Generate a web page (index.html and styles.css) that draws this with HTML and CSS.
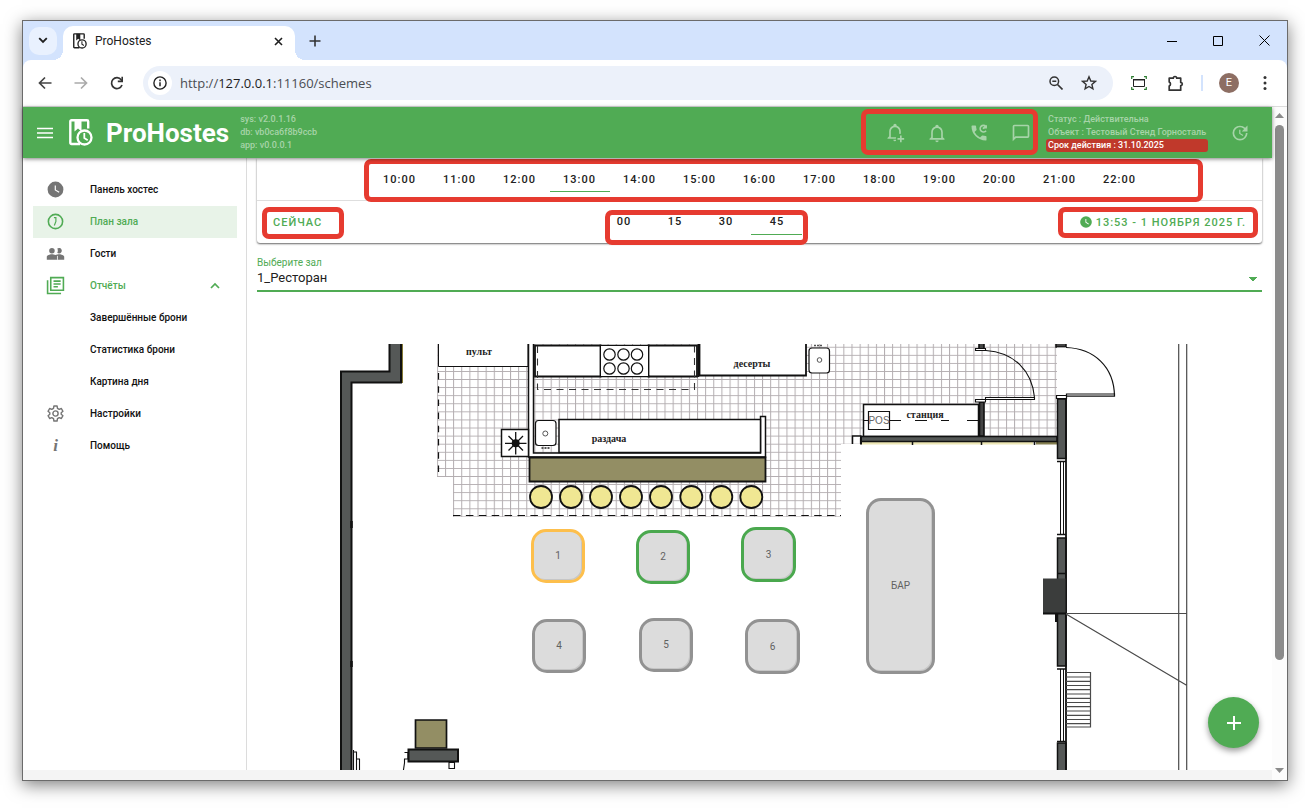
FILE: index.html
```html
<!DOCTYPE html>
<html lang="ru">
<head>
<meta charset="utf-8">
<title>ProHostes</title>
<link rel="stylesheet" href="styles.css">
</head>
<body>
<svg class="defs" aria-hidden="true">
  <symbol id="logo" viewBox="0 0 24 27">
    <path d="M11 25H2.5A1.2 1.2 0 0 1 1.300 23.800V2.500A1.200 1.200 0 0 1 2.500 1.300H18A1.200 1.200 0 0 1 19.200 2.500V9.500" fill="none" stroke="currentColor" stroke-width="2.400"/>
    <path d="M5.500 1h7v11.500L9 9.500l-3.500 3z" fill="currentColor"/>
    <circle cx="15.500" cy="18.500" r="7" fill="none" stroke="currentColor" stroke-width="2.300"/>
    <path d="M15.300 14v5l3.400 2.200" fill="none" stroke="currentColor" stroke-width="1.800"/>
  </symbol>
  <symbol id="clock" viewBox="0 0 24 24"><path fill="currentColor" d="M12 2a10 10 0 1 0 0 20 10 10 0 0 0 0-20zm4.200 14.200L11 13V7h1.500v5.200l4.500 2.700z"/></symbol>
</svg>
<div class="window">
  <div class="tabstrip">
    <button class="tab-search" aria-label="Поиск вкладок"><svg width="10" height="7" viewBox="0 0 10 7"><path d="M1.200 1.200L5 5l3.800-3.800" fill="none" stroke="#1f1f1f" stroke-width="1.800"/></svg></button>
    <div class="tab">
      <svg class="favicon" width="14" height="16"><use href="#logo"/></svg>
      <span class="tab-title">ProHostes</span>
      <button class="plain" aria-label="Закрыть вкладку"><svg width="9" height="9" viewBox="0 0 9 9"><path d="M1 1l7 7M8 1L1 8" stroke="#1f1f1f" stroke-width="1.600"/></svg></button>
    </div>
    <button class="plain new-tab" aria-label="Новая вкладка"><svg width="12" height="12" viewBox="0 0 12 12"><path d="M6 .5v11M.5 6h11" stroke="#333" stroke-width="1.600"/></svg></button>
    <div class="win-buttons">
      <button class="plain" aria-label="Свернуть"><svg width="10" height="10"><path d="M0 5.500h10" stroke="#000"/></svg></button>
      <button class="plain" aria-label="Развернуть"><svg width="10" height="10"><path d="M.5.500h9v9h-9z" fill="none" stroke="#000"/></svg></button>
      <button class="plain" aria-label="Закрыть"><svg width="11" height="11" viewBox="0 0 11 11"><path d="M.5.500l10 10M10.500.500l-10 10" stroke="#000"/></svg></button>
    </div>
  </div>
  <div class="toolbar">
    <button class="plain nav" aria-label="Назад"><svg width="14" height="14" viewBox="0 0 14 14"><path d="M13.500 7H2M7 1.500L1.500 7 7 12.500" fill="none" stroke="#444" stroke-width="1.700"/></svg></button>
    <button class="plain nav" aria-label="Вперёд"><svg width="14" height="14" viewBox="0 0 14 14"><path d="M.5 7H12M7 1.500L12.500 7 7 12.500" fill="none" stroke="#aaa" stroke-width="1.700"/></svg></button>
    <button class="plain nav" aria-label="Обновить"><svg width="14" height="14" viewBox="0 0 14 14"><path d="M12 9a5.400 5.400 0 1 1-.8-5.200L12.600 5" fill="none" stroke="#333" stroke-width="1.700"/><path d="M13 .8v5.400H7.800V4.600h3.600V.8z" fill="#333"/></svg></button>
    <div class="address">
      <span class="site-info"><svg width="14" height="14" viewBox="0 0 14 14"><circle cx="7" cy="7" r="6.100" fill="none" stroke="#222" stroke-width="1.400"/><path d="M7 6.200v4M7 3.600v1.600" stroke="#222" stroke-width="1.500"/></svg></span>
      <span class="url">http://<b>127.0.0.1</b>:11160/schemes</span>
      <button class="plain" aria-label="Масштаб"><svg width="14" height="14" viewBox="0 0 14 14"><circle cx="5.300" cy="5.300" r="4.300" fill="none" stroke="#333" stroke-width="1.500"/><path d="M3.300 5.300h4M8.500 8.500l5 5" stroke="#333" stroke-width="1.600"/></svg></button>
      <button class="plain" aria-label="В закладки"><svg width="16" height="16" viewBox="0 0 16 16"><path d="M8 1.800l1.800 4.200 4.600.4-3.500 3 1 4.500L8 11.500l-3.900 2.400 1-4.500-3.500-3 4.600-.4z" fill="none" stroke="#333" stroke-width="1.400"/></svg></button>
    </div>
    <button class="plain" aria-label="Снимок экрана"><svg width="16" height="16" viewBox="0 0 16 16"><path d="M.7 4V1.700H3M13 1.700h2.300V4M15.300 12v2.300H13M3 14.300H.7V12" fill="none" stroke="#2e7d32" stroke-width="1.200"/><path d="M2.500 4.500h11v7h-11z" fill="none" stroke="#222" stroke-width="1"/><path d="M2 4h12v1.500H2z" fill="#222"/></svg></button>
    <button class="plain" aria-label="Расширения"><svg width="18" height="17" viewBox="0 0 18 17"><path d="M2.200 3.200h4.100a1.700 1.700 0 0 1 3.400 0h4v4.300a1.600 1.600 0 0 1 0 3.200v4.500H2.200v-4.100a2.200 2.200 0 0 0 0-4z" fill="none" stroke="#333" stroke-width="1.700" stroke-linejoin="round"/></svg></button>
    <span class="divider"></span>
    <span class="avatar">E</span>
    <button class="plain" aria-label="Меню"><svg width="4" height="16" viewBox="0 0 4 16"><g fill="#333"><circle cx="2" cy="2.500" r="1.500"/><circle cx="2" cy="8" r="1.500"/><circle cx="2" cy="13.500" r="1.500"/></g></svg></button>
  </div>

  <div class="viewport">
    <div class="page">
      <header class="appbar">
        <button class="plain burger" aria-label="Меню приложения"><svg width="16" height="12" viewBox="0 0 16 12"><path d="M0 1.500h16M0 6h16M0 10.500h16" stroke="#fff" stroke-width="1.700"/></svg></button>
        <svg class="logo" width="24" height="27"><use href="#logo"/></svg>
        <h1 class="brand">ProHostes</h1>
        <div class="meta"><span>sys: v2.0.1.16</span><span>db: vb0ca6f8b9ccb</span><span>app: v0.0.0.1</span></div>
        <div class="actions">
          <button class="plain" aria-label="Добавить уведомление"><svg width="20" height="20" viewBox="0 0 24 24"><path d="M13 19c0 .700.130 1.370.350 2-.360.600-1 1-1.350 1a2 2 0 0 1-2-2h3.100c-.07-.330-.1-.660-.1-1zm-8-.500V19H3v-1l2-2v-6c0-3.100 2.030-5.830 5-6.710V3a2 2 0 0 1 4 0v.29c2.970.880 5 3.610 5 6.710v3.090a5.900 5.900 0 0 0-2 0V10A5 5 0 0 0 7 10v7h6.340c-.2.630-.340 1-.340 2H5zM18 15v3h-3v2h3v3h2v-3h3v-2h-3v-3z"/></svg></button>
          <button class="plain" aria-label="Уведомления"><svg width="20" height="20" viewBox="0 0 24 24"><path d="M10 21h4a2 2 0 0 1-4 0m11-2v1H3v-1l2-2v-6c0-3.100 2.030-5.830 5-6.710V4a2 2 0 0 1 4 0v.29c2.970.880 5 3.610 5 6.710v6zm-4-8a5 5 0 0 0-10 0v7h10z"/></svg></button>
          <button class="plain" aria-label="Звонки"><svg width="20" height="20" viewBox="0 0 24 24"><path d="M20 15.500c-1.250 0-2.450-.2-3.570-.570a1 1 0 0 0-1.020.250l-2.200 2.200a15.100 15.100 0 0 1-6.590-6.590l2.200-2.200c.280-.280.360-.670.250-1.020A11.400 11.400 0 0 1 8.500 4a1 1 0 0 0-1-1H4a1 1 0 0 0-1 1 17 17 0 0 0 17 17 1 1 0 0 0 1-1v-3.500a1 1 0 0 0-1-1z"/><path d="M20.500 9.300A4 4 0 1 1 20.200 4l-3.600 2.800" fill="none" stroke="#a7d4a9" stroke-width="1.900"/><path d="M21.500 2v4.500H17z"/></svg></button>
          <button class="plain" aria-label="Сообщения"><svg width="20" height="20" viewBox="0 0 24 24"><path d="M20 2H4a2 2 0 0 0-2 2v18l4-4h14a2 2 0 0 0 2-2V4a2 2 0 0 0-2-2zm0 14H5.200L4 17.200V4h16z"/></svg></button>
          <span class="mark mark-actions"></span>
        </div>
        <div class="meta license"><span>Статус : Действительна</span><span>Объект : Тестовый Стенд Горносталь</span><span class="expired">Срок действия : 31.10.2025</span></div>
        <button class="plain refresh" aria-label="Обновить данные"><svg width="20" height="20" viewBox="0 0 24 24"><path d="M21 10.120h-6.780l2.740-2.820c-2.730-2.700-7.150-2.800-9.880-.1a6.900 6.900 0 0 0 0 9.800c2.730 2.700 7.150 2.700 9.880 0A6.600 6.600 0 0 0 19 12.100h2c0 1.980-.880 4.550-2.640 6.290a9.060 9.060 0 0 1-12.720 0 8.870 8.870 0 0 1-.03-12.600 9.020 9.020 0 0 1 12.650 0L21 3zM12.500 8v4.250l3.500 2.080-.720 1.210L11 13V8z"/></svg></button>
      </header>

      <div class="body">
        <nav class="drawer">
          <a class="item" href="#"><svg class="ico" viewBox="0 0 24 24"><use href="#clock"/></svg>Панель хостес</a>
          <a class="item active" href="#"><svg class="ico" viewBox="0 0 24 24"><circle cx="12" cy="12" r="9" fill="none" stroke="currentColor" stroke-width="2"/><path d="M10 7h2.500v5l-2 5" fill="none" stroke="currentColor" stroke-width="1.500"/></svg>План зала</a>
          <a class="item" href="#"><svg class="ico" viewBox="0 0 24 24"><path d="M16.500 13c-1.200 0-3.070.340-4.500 1-1.430-.670-3.300-1-4.500-1C5.330 13 1 14.080 1 16.250V20h22v-3.750C23 14.080 18.670 13 16.500 13zM7.500 12a3.500 3.500 0 1 0 0-7 3.500 3.500 0 0 0 0 7zm9 0a3.500 3.500 0 1 0-2.300-6.200 5.300 5.300 0 0 1 0 5.300c.6.600 1.400.900 2.300.900z"/><path d="M14.500 15v5" stroke="#fff"/></svg>Гости</a>
          <button class="item group" aria-expanded="true"><svg class="ico" viewBox="0 0 24 24"><path d="M6 2h16v16H6zM2 5.500V22h17M9.500 6.500h9M9.500 10h9M9.500 13.500h5.500" fill="none" stroke="currentColor" stroke-width="2"/></svg>Отчёты<svg class="chev" width="10" height="7" viewBox="0 0 10 7"><path d="M1 6l4-4 4 4" fill="none" stroke="currentColor" stroke-width="1.700"/></svg></button>
          <a class="item sub" href="#">Завершённые брони</a>
          <a class="item sub" href="#">Статистика брони</a>
          <a class="item sub" href="#">Картина дня</a>
          <a class="item" href="#"><svg class="ico" viewBox="0 0 24 24"><g fill="none" stroke="currentColor" stroke-width="1.800"><circle cx="12" cy="12" r="3.300"/><path stroke-linejoin="round" d="M10 2.500h4l.5 2.900 2.200 1.300 2.700-1 2 3.500-2.200 1.800v2l2.200 1.800-2 3.500-2.700-1-2.200 1.300-.5 2.900h-4l-.5-2.900-2.200-1.300-2.700 1-2-3.500L4.800 13v-2L2.600 9.200l2-3.500 2.700 1 2.200-1.300z"/></g></svg>Настройки</a>
          <a class="item" href="#"><span class="ico info">i</span>Помощь</a>
        </nav>

        <main class="content">
          <section class="timecard">
            <div class="hours">
              <button class="slot">10:00</button><button class="slot">11:00</button><button class="slot">12:00</button><button class="slot on">13:00</button><button class="slot">14:00</button><button class="slot">15:00</button><button class="slot">16:00</button><button class="slot">17:00</button><button class="slot">18:00</button><button class="slot">19:00</button><button class="slot">20:00</button><button class="slot">21:00</button><button class="slot">22:00</button>
              <span class="mark mark-hours"></span>
            </div>
            <div class="minutes-row">
              <button class="textbtn">СЕЙЧАС<span class="mark mark-now"></span></button>
              <div class="minutes">
                <button class="slot">00</button><button class="slot">15</button><button class="slot">30</button><button class="slot on">45</button>
                <span class="mark mark-minutes"></span>
              </div>
              <button class="textbtn date"><svg width="14" height="14"><use href="#clock"/></svg>13:53 - 1 НОЯБРЯ 2025 Г.<span class="mark mark-date"></span></button>
            </div>
          </section>

          <div class="field">
            <label for="hall">Выберите зал</label>
            <select id="hall"><option>1_Ресторан</option></select>
          </div>

          <div class="plan">
            <svg class="drawing" width="1005" height="426" viewBox="257 344 1005 426">
              <defs>
                <pattern id="tiles" x="445" y="371" width="8.130" height="8.080" patternUnits="userSpaceOnUse"><path d="M.5 0v8.080M0 .5h8.130" stroke="#b3adb0" stroke-width="1" fill="none"/></pattern>
              </defs>
              <path d="M437 344h620v100H841v73H453v-40h-16z" fill="url(#tiles)"/>
              <g stroke="#111" fill="none" stroke-width="1.500">
                <path d="M389.500 343H401v39.500h-49.500V771H341V371.500h48.500z" fill="#555857" stroke-width="2"/>
                <path d="M402.500 344v39" stroke="#857a35" stroke-width="1"/>
                <path d="M351.500 521v7M351.500 661v6" stroke-width="2.500"/>
                <path d="M438.500 343v23.500H528V343z" fill="#fff" stroke-width="1"/>
                <path d="M438.500 373v103" stroke-width="1.200" stroke-dasharray="6.500 6.700"/>
                <path d="M453 515.500h388" stroke-width="1.200" stroke-dasharray="7.500 5.400"/>
                <path d="M528.500 343h5v110h227v-36.500h5V457H528.500z" fill="#fff"/>
                <path d="M535 345.500h65.500v31H535zM648.500 345.500h48.500v31h-48.500zM699.500 343v32.500H806V343" fill="#fff" stroke-width="1.800"/>
                <path d="M600 376.500h50M600 345.500h50M698.500 344v33"/>
                <path d="M601 346h47v30h-47z" fill="#fff" stroke="none"/>
                <g stroke-width="1.200"><circle cx="609.500" cy="354.500" r="5.700"/><circle cx="623.500" cy="354.500" r="5.700"/><circle cx="637" cy="354.500" r="5.700"/><circle cx="609.500" cy="368.500" r="5.700"/><circle cx="623.500" cy="368.500" r="5.700"/><circle cx="637" cy="368.500" r="5.700"/></g>
                <path d="M537.500 346v43.500h157V346" stroke="#333" stroke-width="1.100" stroke-dasharray="7 5.500"/>
                <rect x="809" y="348" width="20.500" height="25" rx="3" fill="#fff" stroke-width="1.200"/><circle cx="819.500" cy="360" r="2.300" stroke="#555" stroke-width="1"/><path d="M814 345.500h9" stroke="#555" stroke-dasharray="2 1"/>
                <rect x="535.500" y="420.500" width="20.500" height="25" rx="3" fill="#fff" stroke-width="1.200"/><circle cx="545.300" cy="433.500" r="2.500" stroke="#555" stroke-width="1"/><path d="M541.500 448h9" stroke="#555" stroke-width="2" stroke-dasharray="2 1"/>
                <path d="M559 419.500h201.500v33H559z" fill="#fff"/>
                <path d="M529.500 457.500h236v24h-236z" fill="#938e64" stroke-width="1.800"/>
                <path d="M501.500 429.500h27v27h-27z" fill="#fff"/>
                <path d="M515.700 432v22.500M505 443.300h21.500M508.500 436l14.500 14.500M523 436l-14.500 14.500" stroke-width="1.300"/><circle cx="515.700" cy="443.300" r="4" fill="#111" stroke="none"/>
                <g fill="#f0e793" stroke-width="1.800"><circle cx="541" cy="497" r="11"/><circle cx="571" cy="497" r="11"/><circle cx="601" cy="497" r="11"/><circle cx="631" cy="497" r="11"/><circle cx="661" cy="497" r="11"/><circle cx="691.300" cy="497" r="11"/><circle cx="721.300" cy="497" r="11"/><circle cx="751.300" cy="497" r="11"/></g>

                <path d="M863.500 404.500h115v32h-115z" fill="#fff"/>
                <path d="M868.500 411.500h21v18h-21z" stroke-width="1.200"/>
                <path d="M864 420.500h5M889 420.500h12M915 420.500h12M941 420.500h8M967 420.500h11" stroke-width="1"/>
                <path d="M979.500 402h4.500v34h-4.500zM979 343h5v6h-5z" fill="#444" stroke-width="1.600"/>
                <path d="M975.500 348.500h10v2h-10zM975.500 399.500h10v2.500h-10zM985.500 397.500h49v2h-49z" fill="#fff" stroke-width="1.100"/>
                <path d="M986 350.500c28 2 46 20 48.500 47" stroke-width="1.100"/>
                <path d="M1056 343h10v4h-10z" fill="#444"/>
                <path d="M1057 347.500h9.500V396h-9.500z" fill="#fff" stroke="none"/>
                <path d="M1066 347.500c28 1 48 19 48.500 48.500M1066.500 394h48v2.200h-48zM1056.500 395.500h10v3h-10z" stroke-width="1.200"/>
                <path d="M852.500 444v-8h9" fill="#fff"/>
                <path d="M861 442h172v2.500H861z" fill="#ece6b4" stroke="none"/><path d="M1036 442h21v2.500h-21z" fill="#857f50" stroke="none"/>
                <path d="M912.500 442v3M981.500 442v3M1034.500 442v3"/>
                <path d="M861 436.500h196v5H861z" fill="#555857"/>
                <path d="M861 436v8.500" stroke-width="2"/>
                <g fill="#555857"><path d="M1057.500 399h8.500v59.500h-8.500zM1057.500 538h8.500v128h-8.500zM1057.500 743h8.500v28h-8.500z"/></g>
                <path d="M1066 398v373" stroke-width="1.800"/>
                <path d="M1057 461.500h9M1057 534.500h9M1057 669h9M1057 741.500h9M1057 573.500h9"/>
                <path d="M1060.500 461v74M1060.500 669v73M1063.500 461v74M1063.500 669v73" stroke-width="1"/>
                <path d="M1043 578.500h22.500v35H1043z" fill="#3b3d3c" stroke="none"/>
                <path d="M1043 613.500h23M1056 613v9" stroke-width="2"/>
                <g stroke="#4a4a4a" stroke-width="1.200"><path d="M1066 613.500h121M1066 614l121 71.500M1178.700 344v427M1186.700 344v427"/>
                <path d="M1066 672.500h24.500V727H1066M1066 677h24M1066 681.300h24M1066 685.500h24M1066 689.700h24M1066 694h24M1066 698.300h24M1066 702.500h24M1066 706.700h24M1066 711h24M1066 715.300h24M1066 719.500h24M1066 723.700h24"/></g>
                <path d="M415.500 720h31v28h-31z" fill="#938e64" stroke-width="1.700"/>
                <path d="M408.500 749.500h49.500v12h-49.500z" fill="#555857" stroke-width="2"/>
                <path d="M449 762.500h5.500v6H449zM404.500 752.500h3.500v6.500h-3.500v4l-1.200 8M353.500 750v21M353.500 752h3v7h3v12M356.500 759v12" stroke-width="1.100"/>
              </g>
              <g class="plan-text">
                <text x="479" y="355">пульт</text><text x="752" y="367">десерты</text><text x="609" y="442">раздача</text><text x="925" y="418">станция</text>
                <text class="pos" x="879" y="424">POS</text>
              </g>
            </svg>
            <button class="seat t1 wait">1</button>
            <button class="seat t2 busy">2</button>
            <button class="seat t3 busy">3</button>
            <button class="seat t4">4</button>
            <button class="seat t5">5</button>
            <button class="seat t6">6</button>
            <button class="seat bar">БАР</button>
          </div>
        </main>
      </div>
      <button class="fab" aria-label="Добавить"><svg width="14" height="14" viewBox="0 0 14 14"><path d="M7 0v14M0 7h14" stroke="#fff" stroke-width="2"/></svg></button>
      <div class="hscroll"></div>
    </div>
    <div class="vscroll">
      <svg width="9" height="5"><path d="M0 5L4.500 0 9 5z" fill="#8b8b8b"/></svg>
      <div class="thumb"></div>
      <svg width="9" height="5"><path d="M0 0h9L4.500 5z" fill="#8b8b8b"/></svg>
    </div>
  </div>
</div>
</body>
</html>
```
FILE: styles.css
```css
* { box-sizing: border-box; }

body {
  margin: 0;
  min-height: 100vh;
  padding: 20px 17px 27px 22px;
  display: flex;
  background: #fff;
  font-family: Roboto, "Noto Sans", sans-serif;
  color: #212121;
}

button { font-family: inherit; cursor: pointer; }
a { color: inherit; text-decoration: none; }
svg { display: block; flex: none; }
.defs { position: absolute; width: 0; height: 0; }

.plain {
  border: 0;
  padding: 0;
  background: none;
  display: flex;
  align-items: center;
  justify-content: center;
  flex: none;
}

/* Browser window */
.window {
  flex: 1;
  min-width: 0;
  display: flex;
  flex-direction: column;
  border: 1px solid #6b6b6b;
  box-shadow: 0 4px 16px rgba(0, 0, 0, .5);
  background: #d3e3fd;
}

.tabstrip {
  height: 39px;
  display: flex;
  align-items: center;
  padding-left: 6px;
}
.tab-search {
  width: 28px;
  height: 28px;
  padding: 0;
  border: 0;
  border-radius: 10px;
  background: #e9f1fe;
  display: flex;
  align-items: center;
  justify-content: center;
}
.tab {
  position: relative;
  align-self: flex-end;
  width: 232px;
  height: 34px;
  margin-left: 6px;
  padding: 0 12px 4px 10px;
  display: flex;
  align-items: center;
  gap: 8px;
  background: #fff;
  border-radius: 10px 10px 0 0;
}
.tab::before, .tab::after {
  content: "";
  position: absolute;
  bottom: 0;
  width: 10px;
  height: 10px;
}
.tab::before { left: -10px; background: radial-gradient(circle at 0 0, transparent 10px, #fff 10px); }
.tab::after { right: -10px; background: radial-gradient(circle at 100% 0, transparent 10px, #fff 10px); }
.tab-title {
  flex: 1;
  font-size: 12px;
  line-height: 16px;
}
.new-tab { margin-left: 14px; }
.win-buttons {
  margin-left: auto;
  display: flex;
  gap: 36px;
  padding-right: 17px;
}

.toolbar {
  height: 47px;
  display: flex;
  align-items: center;
  gap: 20px;
  padding: 0 20px 0 15px;
  background: #fff;
  border-bottom: 1px solid #dcdcdc;
  border-radius: 8px 8px 0 0;
}
.nav { margin-right: 2px; }
.address {
  flex: 1;
  height: 34px;
  margin-left: -3px;
  margin-right: -2px;
  padding: 0 16px 0 5px;
  display: flex;
  align-items: center;
  gap: 18px;
  border-radius: 17px;
  background: #ecf1fa;
}
.site-info {
  width: 24px;
  height: 24px;
  margin-right: -10px;
  display: flex;
  align-items: center;
  justify-content: center;
  border-radius: 50%;
  background: #fff;
}
.url {
  flex: 1;
  font: 13px "Open Sans", sans-serif;
  color: #4a4d52;
}
.url b { font-weight: 400; color: #1f1f1f; }
.divider { width: 2px; height: 16px; background: #d3e3fd; margin: 0 -4px; }
.avatar {
  width: 20px;
  height: 20px;
  margin-right: 4px;
  border-radius: 50%;
  background: #8d6e63;
  color: #fff;
  font-size: 11px;
  line-height: 20px;
  text-align: center;
}

.viewport { flex: 1; display: flex; background: #fff; }
.page {
  position: relative;
  flex: 1;
  min-width: 0;
  display: flex;
  flex-direction: column;
}
.vscroll {
  width: 15px;
  padding: 6px 0 7px;
  display: flex;
  flex-direction: column;
  align-items: center;
  gap: 7px;
  background: #fcfcfc;
}
.thumb {
  width: 9px;
  height: 535px;
  margin-bottom: auto;
  border-radius: 5px;
  background: #8b8b8b;
}
.hscroll { height: 10px; background: #f4f4f4; }

/* Application bar */
.appbar {
  position: relative;
  z-index: 2;
  height: 51px;
  display: flex;
  align-items: center;
  padding: 0 22px 0 14px;
  background: #50ab54;
  box-shadow: 0 1px 4px rgba(0, 0, 0, .5);
}
.logo { margin-left: 16px; color: #fff; }
.brand {
  margin: 0 0 0 13px;
  color: #fff;
  font-size: 26px;
  font-weight: 700;
  line-height: 30px;
}
.meta {
  margin-left: 11px;
  display: flex;
  flex-direction: column;
  font-size: 9px;
  font-weight: 500;
  line-height: 13px;
  color: #a7d4a9;
  white-space: nowrap;
}
.actions {
  position: relative;
  margin-left: auto;
  display: flex;
  gap: 22px;
}
.actions svg, .refresh svg { fill: #a7d4a9; }
.license { margin-left: 15px; width: 162px; }
.license span { padding: 0 2px; }
.license .expired {
  background: #c0392b;
  border-radius: 3px;
  color: #fff;
}
.refresh { margin-left: 22px; }

/* Highlight frames */
.mark {
  position: absolute;
  border: 5px solid #e63b30;
  border-radius: 7px;
  pointer-events: none;
}
.mark-actions { inset: -14px -7px -12px -24px; }
.mark-hours { inset: 1px 59px -2px 107px; }
.mark-now { inset: -2px -14px -3px -3px; }
.mark-minutes { inset: 0 -6px -10px 7px; }
.mark-date { inset: -2px -4px -2px -13px; }

/* Layout */
.body { flex: 1; display: flex; }
.drawer {
  flex: none;
  width: 224px;
  padding: 16px 9px 16px 10px;
  border-right: 1px solid #dcdcdc;
}
.item {
  width: 100%;
  height: 32px;
  padding: 0 17px 1px 13px;
  display: flex;
  align-items: center;
  border: 0;
  background: none;
  font-size: 10px;
  font-weight: 500;
  text-align: left;
  color: #111;
}
.ico {
  width: 19px;
  height: 19px;
  margin-right: 25px;
  color: #757575;
  fill: #757575;
}
.info {
  font: italic bold 17px/19px "Liberation Serif", serif;
  text-align: center;
}
.sub { padding-left: 57px; }
.active { background: #e8f3e8; }
.active, .group, .active .ico, .group .ico { color: #50ab54; }
.chev { margin-left: auto; }

.content {
  flex: 1;
  min-width: 0;
  display: flex;
  flex-direction: column;
  padding: 0 10px;
}
.timecard {
  box-shadow: 0 1px 2px rgba(0, 0, 0, .6);
  border-radius: 0 0 3px 3px;
}
.hours {
  position: relative;
  height: 43px;
  display: flex;
  justify-content: center;
  align-items: flex-start;
  padding-top: 9px;
  border-bottom: 1px solid #dedede;
}
.slot {
  width: 60px;
  height: 25px;
  padding: 0;
  border: 0;
  border-bottom: 1px solid transparent;
  background: none;
  font-size: 11px;
  font-weight: 500;
  letter-spacing: 1px;
  color: #212121;
}
.on { border-bottom-color: #50ab54; }
.minutes-row {
  display: flex;
  justify-content: space-between;
  align-items: center;
  height: 42px;
  padding: 0 8px;
}
.minutes {
  position: relative;
  display: flex;
  height: 25px;
}
.minutes .slot { width: 51px; }
.textbtn {
  position: relative;
  height: 27px;
  padding: 0 8px;
  display: flex;
  align-items: center;
  gap: 3px;
  border: 0;
  background: none;
  font-size: 11px;
  font-weight: 500;
  letter-spacing: 1px;
  color: #50ab54;
}

.field {
  margin-top: 14px;
  display: flex;
  flex-direction: column;
}
.field label {
  font-size: 10px;
  line-height: 12px;
  color: #50ab54;
}
.field select {
  height: 23px;
  padding: 0 0 3px;
  border: 0;
  border-bottom: 2px solid #50ab54;
  border-radius: 0;
  appearance: none;
  font: 13px/14px Roboto, sans-serif;
  color: #212121;
  background: linear-gradient(to bottom left, #50ab54 50%, transparent 50%) right 9px top 8px / 5px 4px no-repeat,
    linear-gradient(to bottom right, #50ab54 50%, transparent 50%) right 4px top 8px / 5px 4px no-repeat;
}

/* Floor plan */
.plan {
  position: relative;
  flex: 1;
  margin-top: 52px;
  overflow: hidden;
}
.plan-text {
  font: bold 10px "Liberation Serif", serif;
  fill: #222;
  text-anchor: middle;
}
.pos { font: 10px "Liberation Sans", sans-serif; fill: #666; }
.seat {
  position: absolute;
  width: 54px;
  height: 54px;
  padding: 0 0 1px;
  border: 3px solid #929292;
  border-radius: 15px;
  background: #dcdcdc;
  box-shadow: inset -1px -1px 0 #c6c6c6;
  font-size: 10px;
  color: #616161;
}
.wait { border-color: #fdbf4c; }
.busy { border-color: #4aa84e; }
.t1 { left: 274px; top: 185px; }
.t2 { left: 379px; top: 186px; }
.t3 { left: 484px; top: 183px; width: 55px; height: 55px; }
.t4 { left: 275px; top: 275px; }
.t5 { left: 382px; top: 274px; }
.t6 { left: 488px; top: 275px; width: 55px; height: 55px; }
.bar { left: 609px; top: 154px; width: 69px; height: 176px; }

.fab {
  position: absolute;
  right: 13px;
  bottom: 32px;
  width: 51px;
  height: 51px;
  padding: 0;
  border: 0;
  border-radius: 50%;
  display: flex;
  align-items: center;
  justify-content: center;
  background: #50ab54;
  box-shadow: 0 3px 6px rgba(0, 0, 0, .4);
}
```
